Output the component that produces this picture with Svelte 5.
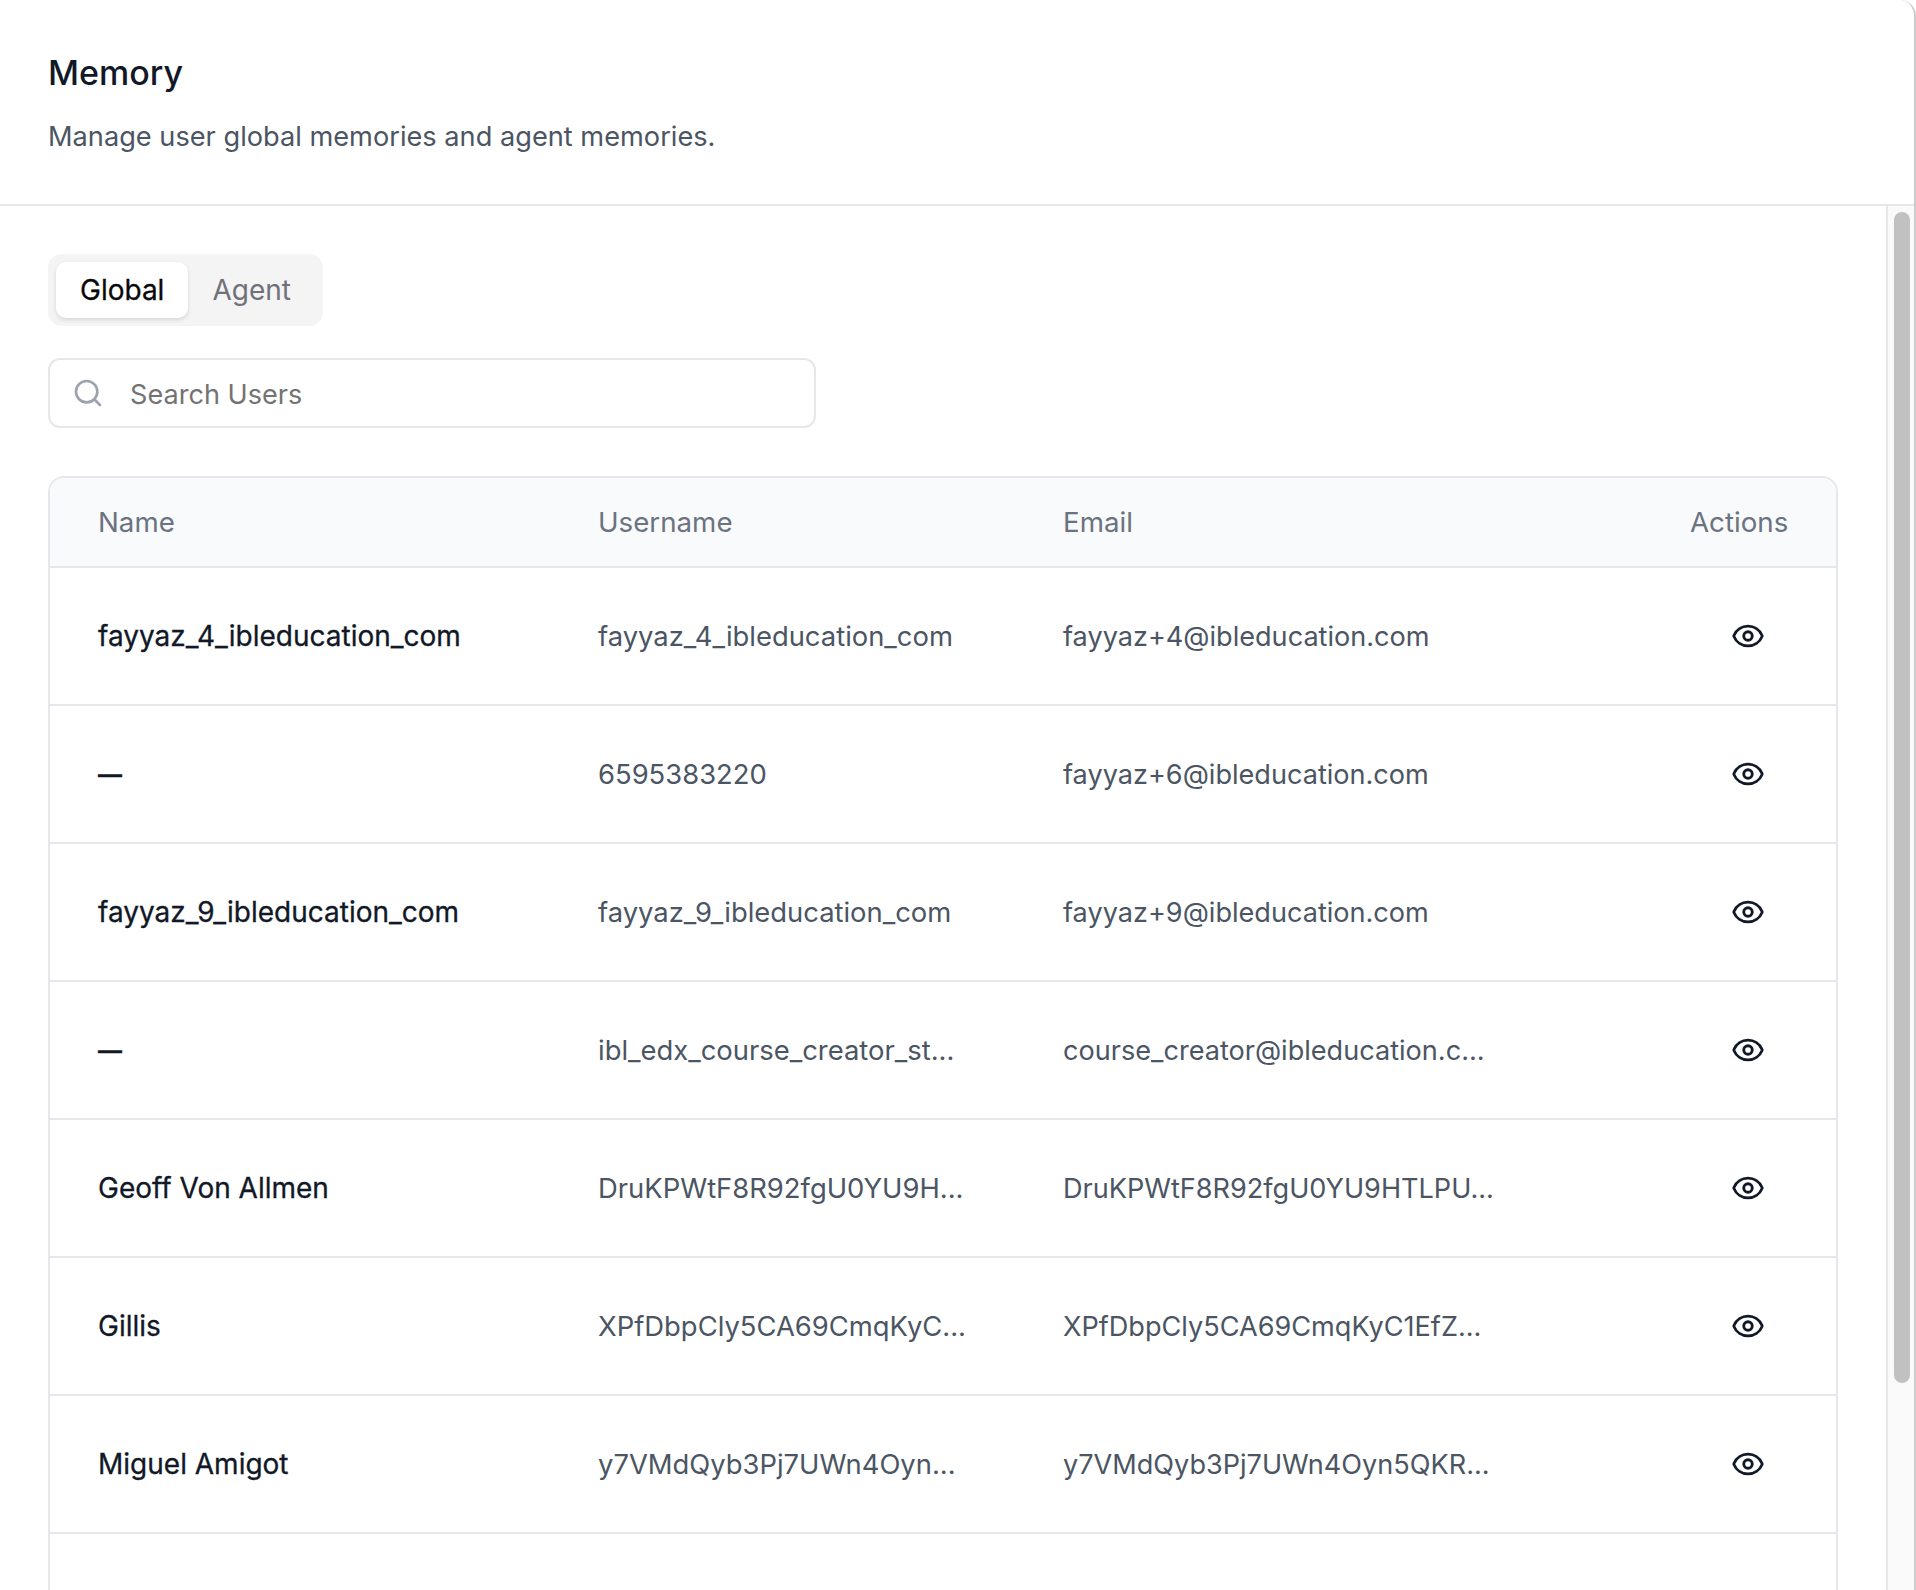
<script lang="ts">
  const users = [
    { name: 'fayyaz_4_ibleducation_com', username: 'fayyaz_4_ibleducation_com', email: 'fayyaz+4@ibleducation.com' },
    { name: '—', username: '6595383220', email: 'fayyaz+6@ibleducation.com' },
    { name: 'fayyaz_9_ibleducation_com', username: 'fayyaz_9_ibleducation_com', email: 'fayyaz+9@ibleducation.com' },
    { name: '—', username: 'ibl_edx_course_creator_st...', email: 'course_creator@ibleducation.c...' },
    { name: 'Geoff Von Allmen', username: 'DruKPWtF8R92fgU0YU9H...', email: 'DruKPWtF8R92fgU0YU9HTLPU...' },
    { name: 'Gillis', username: 'XPfDbpCly5CA69CmqKyC...', email: 'XPfDbpCly5CA69CmqKyC1EfZ...' },
    { name: 'Miguel Amigot', username: 'y7VMdQyb3Pj7UWn4Oyn...', email: 'y7VMdQyb3Pj7UWn4Oyn5QKR...' },
    { name: '', username: '', email: '' }
  ];
</script>

<div class="shell">
  <header class="page-head">
    <h1>Memory</h1>
    <p>Manage user global memories and agent memories.</p>
  </header>

  <div class="body">
    <main class="content">
      <div class="tabs">
        <button class="tab active">Global</button>
        <button class="tab">Agent</button>
      </div>

      <div class="search">
        <svg width="32" height="32" viewBox="0 0 24 24" fill="none" stroke="currentColor" stroke-width="2" stroke-linecap="round" stroke-linejoin="round">
          <circle cx="11" cy="11" r="8"/>
          <path d="m21 21-4.3-4.3"/>
        </svg>
        <span>Search Users</span>
      </div>

      <div class="table-wrap">
        <table>
          <thead>
            <tr>
              <th class="col-name">Name</th>
              <th class="col-username">Username</th>
              <th class="col-email">Email</th>
              <th class="col-actions">Actions</th>
            </tr>
          </thead>
          <tbody>
            {#each users as user}
              <tr>
                <td class="name" class:dash={user.name === '—'}>{user.name}</td>
                <td class="username">{user.username}</td>
                <td class="email">{user.email}</td>
                <td class="actions">
                  {#if user.email}
                    <svg width="34" height="34" viewBox="0 0 24 24" fill="none" stroke="currentColor" stroke-width="2" stroke-linecap="round" stroke-linejoin="round">
                      <path d="M2.062 12.348a1 1 0 0 1 0-.696 10.75 10.75 0 0 1 19.876 0 1 1 0 0 1 0 .696 10.75 10.75 0 0 1-19.876 0"/>
                      <circle cx="12" cy="12" r="3"/>
                    </svg>
                  {/if}
                </td>
              </tr>
            {/each}
          </tbody>
        </table>
      </div>
    </main>

    <div class="scrollbar">
      <div class="thumb"></div>
    </div>
  </div>
</div>

<style>
  :global(body) {
    margin: 0;
    background: #fff;
  }

  .shell {
    height: 1590px;
    box-sizing: border-box;
    display: flex;
    flex-direction: column;
    overflow: hidden;
    border-right: 2px solid #cbcbcb;
    border-top-right-radius: 16px;
    background: #fff;
    font-family: Inter, "Noto Sans", sans-serif;
  }

  .page-head {
    height: 206px;
    flex-shrink: 0;
    box-sizing: border-box;
    padding: 51px 48px 0;
    border-bottom: 2px solid #e5e7eb;
  }

  h1 {
    margin: 0;
    font-size: 34px;
    line-height: 44px;
    font-weight: 500;
    color: #111827;
  }

  .page-head p {
    margin: 22px 0 0;
    font-size: 27.2px;
    line-height: 40px;
    color: #4b5563;
  }

  .body {
    flex: 1;
    min-height: 0;
    display: flex;
  }

  .content {
    flex: 1;
    min-width: 0;
    padding: 48px 48px 0;
  }

  .tabs {
    display: inline-flex;
    align-items: center;
    height: 72px;
    box-sizing: border-box;
    padding: 8px;
    border-radius: 14px;
    background: #f4f4f5;
    vertical-align: top;
  }

  .tab {
    height: 56px;
    padding: 0 24px;
    border: none;
    border-radius: 10px;
    background: transparent;
    font: inherit;
    font-size: 28px;
    color: #71717a;
  }

  .tab.active {
    background: #fff;
    color: #09090b;
    -webkit-text-stroke: 0.3px;
    box-shadow: 0 2px 4px rgba(0, 0, 0, 0.12);
  }

  .search {
    display: flex;
    align-items: center;
    gap: 26px;
    width: 768px;
    height: 70px;
    box-sizing: border-box;
    margin-top: 32px;
    padding: 0 22px;
    border: 2px solid #e5e7eb;
    border-radius: 12px;
    font-size: 27.1px;
    color: #737373;
  }

  .search span {
    padding-top: 2px;
  }

  .search svg {
    color: #9ca3af;
  }

  .table-wrap {
    margin-top: 48px;
    border: 2px solid #e5e7eb;
    border-bottom: none;
    border-radius: 16px 16px 0 0;
    overflow: hidden;
  }

  table {
    width: 100%;
    table-layout: fixed;
    border-collapse: collapse;
    font-size: 28px;
  }

  th {
    height: 89px;
    padding: 0 48px;
    box-sizing: border-box;
    border-bottom: 2px solid #e5e7eb;
    background: #f9fafb;
    text-align: left;
    font-size: 27.7px;
    font-weight: 400;
    color: #6b7280;
  }

  .col-name { width: 500px; }
  .col-username { width: 465px; }
  .col-actions {
    width: 194px;
    padding-right: 49px;
    text-align: right;
  }

  td {
    height: 138px;
    padding: 0 48px;
    box-sizing: border-box;
    border-bottom: 2px solid #e5e7eb;
    white-space: nowrap;
  }

  .name {
    font-size: 28px;
    font-weight: 400;
    -webkit-text-stroke: 0.3px;
    color: #111827;
  }

  .name.dash {
    font-size: 24px;
    font-weight: 600;
  }

  .username {
    font-size: 27.4px;
    color: #4b5563;
  }

  .email {
    font-size: 27.1px;
    color: #4b5563;
  }

  .actions {
    padding-right: 71px;
    color: #111827;
  }

  .actions svg {
    display: block;
    margin-left: auto;
  }

  .scrollbar {
    width: 26px;
    flex-shrink: 0;
    box-sizing: content-box;
    padding-top: 6px;
    border-left: 2px solid #e8e8e8;
    background: #fafafa;
  }

  .thumb {
    width: 16px;
    height: 1171px;
    margin-left: 6px;
    border-radius: 8px;
    background: #c1c1c1;
  }
</style>
